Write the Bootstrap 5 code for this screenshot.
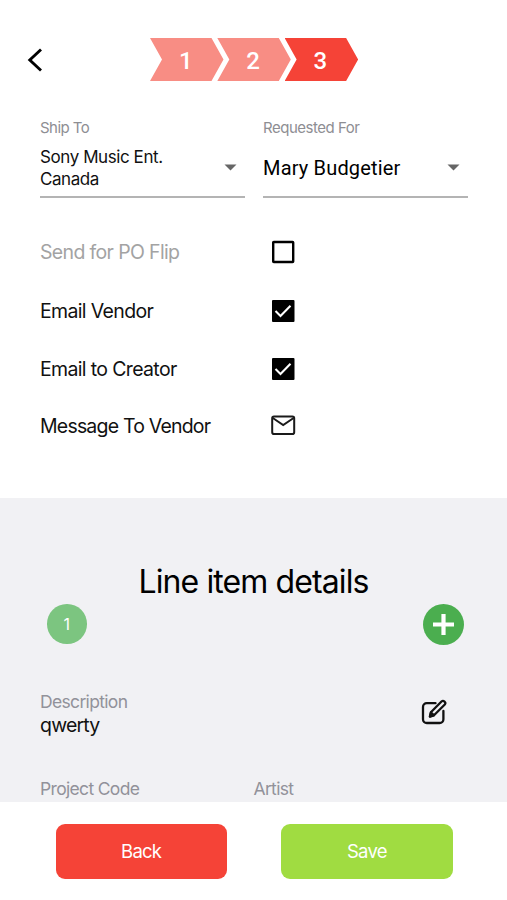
<!DOCTYPE html>
<html lang="en">
<head>
<meta charset="utf-8">
<meta name="viewport" content="width=device-width, initial-scale=1">
<title>Line item details</title>
<link href="https://cdn.jsdelivr.net/npm/bootstrap@5.3.0/dist/css/bootstrap.min.css" rel="stylesheet">
<style>
body{font-family:Inter,"Liberation Sans",sans-serif;color:#111;height:900px;overflow:hidden;background:#fff}
svg{display:block;flex:none}
.topbar{height:119px;padding:38px 0 0 27px}
.back-link{width:16px;height:43px}
.steps{margin-left:107px}
.step{width:73.5px;height:43px;margin-right:-6.2px;padding:1px 2px 0 0;background:#f88d84;color:#fff;font:500 24px/45px Roboto,sans-serif;clip-path:polygon(0 0,61.5px 0,100% 50%,61.5px 100%,0 100%,12px 50%)}
.step.current{background:#f54337}
.fields{padding:0 39.5px 0 40px;gap:18.5px}
.field{width:204.8px}
.field-label{font-size:15px;line-height:18px;letter-spacing:-.55px;color:#8e8e93}
.field-label.wide{letter-spacing:-.48px}
.field-box{height:61px;border-bottom:2px solid #b4b4b4;padding:2px 8px 0 0}
.ship-value{font-size:17px;line-height:22px;letter-spacing:-.42px}
.person-value{font:400 20px/24px Roboto,sans-serif;letter-spacing:.17px;color:#000;padding-top:1px}
.options{padding:25px 40px 0;height:300px}
.option{height:58.6px;font-size:19.5px;letter-spacing:-.65px;line-height:24px}
.option span{width:230px}
.option.off{color:#a3a3a3}
.option.message{height:54px}
.option.message span{letter-spacing:-.8px}
.option.message svg{margin-top:-1px}
.details{height:304px;background:#f1f1f4;padding:65px 40px 0}
.details h1{font-size:32px;line-height:38px;font-weight:400;letter-spacing:-.9px;color:#000}
.item-bar{height:42px;margin-top:2px;padding:0 3.3px 0 7px}
.item-dot{width:39.5px;height:39.5px;background:#7cc580;color:#fff;font-size:16px}
.info-label{font-size:17.5px;line-height:22px;letter-spacing:-.67px;color:#92929a}
.info-value{font-size:19.5px;line-height:24px;letter-spacing:-.8px}
.info-row{margin-top:46px;height:46px;padding-right:20px}
.codes{margin-top:41px}
.codes div{width:214px}
.footer-bar{height:98px;padding:21.5px 54.5px 0 55.5px}
.action{width:171.3px;height:55.3px;border:0;border-radius:9px;padding-top:8px;color:#fff;font-size:18.5px;letter-spacing:-.75px}
.action:hover{color:#fff}
.action-back,.action-back:hover{background:#f54337}
.action-save,.action-save:hover{background:#a0dc41}
</style>
<script src="https://cdn.jsdelivr.net/npm/bootstrap@5.3.0/dist/js/bootstrap.bundle.min.js"></script>
</head>
<body>
<header class="topbar d-flex align-items-start">
  <a class="back-link d-flex align-items-center" href="#" aria-label="Go back"><svg width="16" height="26" viewBox="0 0 16 26" fill="none" stroke="#000" stroke-width="2.9"><path d="M14 2.500 2.800 13 14 23.500"/></svg></a>
  <div class="steps d-flex text-center">
    <div class="step">1</div><div class="step">2</div><div class="step current">3</div>
  </div>
</header>
<section class="fields d-flex">
  <div class="field">
    <div class="field-label">Ship To</div>
    <div class="field-box d-flex align-items-center justify-content-between">
      <div class="ship-value">Sony Music Ent.<br>Canada</div>
      <svg width="13" height="7" viewBox="0 0 13 7"><path d="M.5.500h12L6.500 6.500z" fill="#666"/></svg>
    </div>
  </div>
  <div class="field">
    <div class="field-label wide">Requested For</div>
    <div class="field-box d-flex align-items-center justify-content-between">
      <div class="person-value">Mary Budgetier</div>
      <svg width="13" height="7" viewBox="0 0 13 7"><path d="M.5.500h12L6.500 6.500z" fill="#666"/></svg>
    </div>
  </div>
</section>
<section class="options">
  <div class="option off d-flex align-items-center"><span>Send for PO Flip</span>
    <svg width="26" height="24" viewBox="0 0 26 24"><rect x="3.200" y="2" width="20" height="20" rx=".6" fill="none" stroke="#000" stroke-width="2.400"/></svg></div>
  <div class="option d-flex align-items-center"><span>Email Vendor</span>
    <svg width="26" height="24" viewBox="0 0 26 24"><rect x="2" y="1" width="22.500" height="22" rx="1" fill="#000"/><path d="m5.500 12 5 5L20.500 6.800" fill="none" stroke="#fff" stroke-width="2.100"/></svg></div>
  <div class="option d-flex align-items-center"><span>Email to Creator</span>
    <svg width="26" height="24" viewBox="0 0 26 24"><rect x="2" y="1" width="22.500" height="22" rx="1" fill="#000"/><path d="m5.500 12 5 5L20.500 6.800" fill="none" stroke="#fff" stroke-width="2.100"/></svg></div>
  <div class="option message d-flex align-items-center"><span>Message To Vendor</span>
    <svg width="26" height="24" viewBox="0 0 26 24" fill="none" stroke="#1a1a1a" stroke-width="2"><rect x="2.200" y="3.500" width="22" height="17.500" rx="1.800"/><path d="m2.800 5 10.400 7 10.400-7"/></svg></div>
</section>
<section class="details">
  <h1 class="text-center mb-0">Line item details</h1>
  <div class="item-bar d-flex align-items-center justify-content-between">
    <div class="item-dot rounded-circle d-flex align-items-center justify-content-center">1</div>
    <svg width="41" height="41" viewBox="0 0 41 41"><circle cx="20.500" cy="20.500" r="20.500" fill="#4bae4f"/><path d="M20.500 10v21M10 20.500h21" stroke="#fff" stroke-width="4.200"/></svg>
  </div>
  <div class="info-row d-flex align-items-center justify-content-between">
    <div><div class="info-label">Description</div><div class="info-value">qwerty</div></div>
    <svg class="mb-1" width="26" height="28" viewBox="0 0 26 28" fill="none" stroke="#111" stroke-width="2.300" stroke-linecap="round" stroke-linejoin="round"><path d="M14.500 5.200H5.800A3.800 3.800 0 0 0 2 9v12.200A3.800 3.800 0 0 0 5.800 25h12.800a3.800 3.800 0 0 0 3.800-3.800V13"/><path d="m8.900 18.600 1-4.300L20.500 3.500c1.900-1.700 5 .9 3.300 3L13 17.300z"/><path d="m9 18.500 1-4 2.800 2.700z" fill="#111"/></svg>
  </div>
  <div class="codes info-label d-flex"><div>Project Code</div><div>Artist</div></div>
</section>
<footer class="footer-bar d-flex justify-content-between">
  <button class="btn action action-back" type="button">Back</button>
  <button class="btn action action-save" type="button">Save</button>
</footer>
</body>
</html>
